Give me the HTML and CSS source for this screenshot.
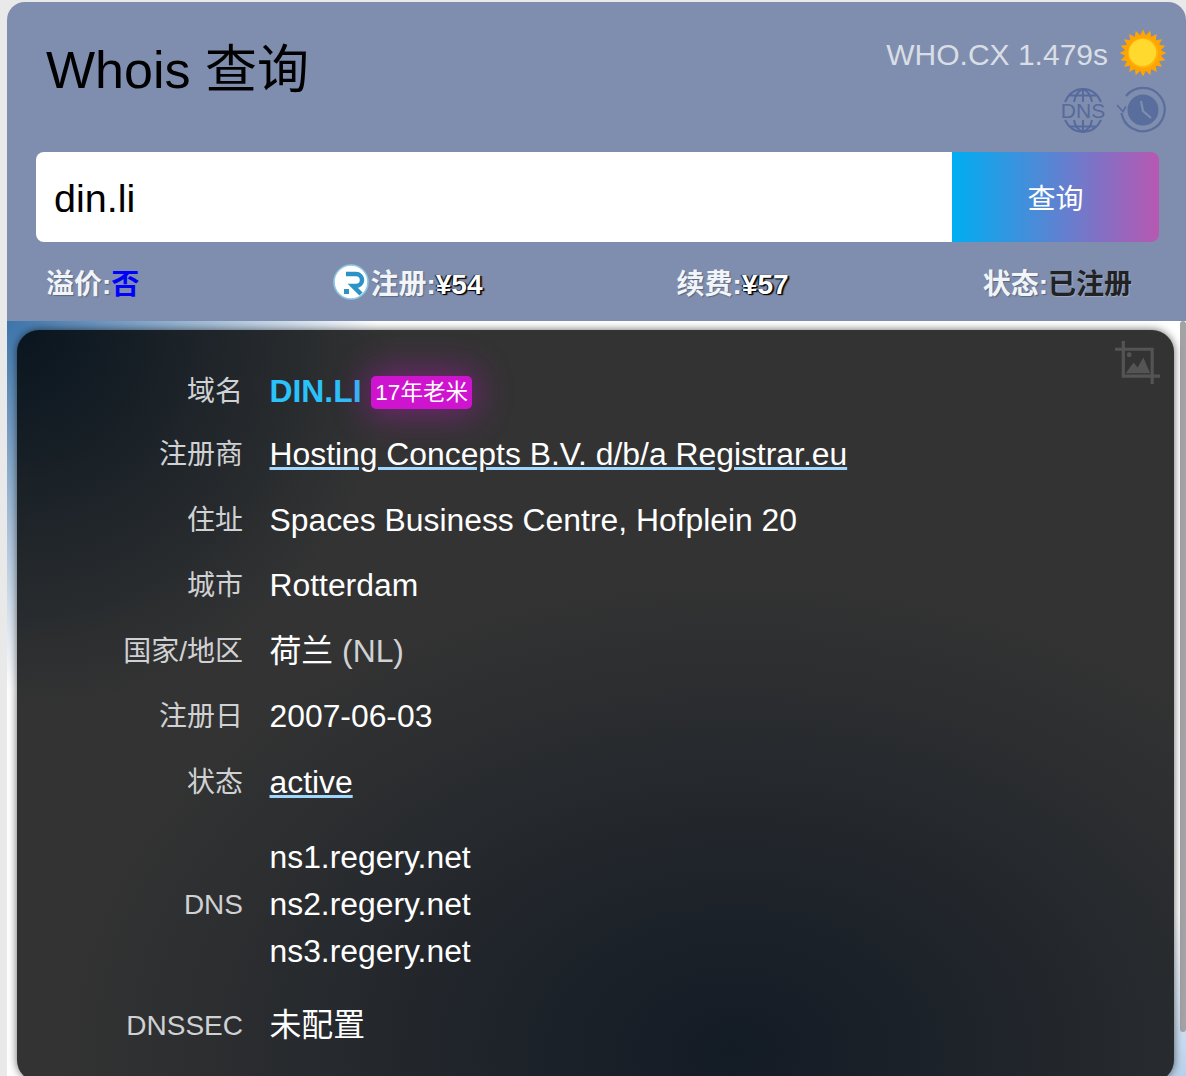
FILE: index.html
```html
<!DOCTYPE html>
<html lang="zh-CN">
<head>
    <meta charset="UTF-8">
    <meta name="viewport" content="width=device-width, initial-scale=1.0">
    <title>Whois 查询</title>
    <link rel="stylesheet" href="styles.css">
</head>
<body>
    <div class="page">
        <header class="top">
            <div class="top-head">
                <h1>Whois 查询</h1>
                <div class="top-tools">
                    <div class="speed">
                        <span>WHO.CX 1.479s</span>
                        <svg class="sun" viewBox="-24 -24 48 48" width="48" height="48">
                            <polygon fill="#ffa400" points="0,-23.5 2.82,-17.78 7.26,-22.35 8.17,-16.04 13.81,-19.01 12.73,-12.73 19.01,-13.81 16.04,-8.17 22.35,-7.26 17.78,-2.82 23.5,0 17.78,2.82 22.35,7.26 16.04,8.17 19.01,13.81 12.73,12.73 13.81,19.01 8.17,16.04 7.26,22.35 2.82,17.78 0,23.5 -2.82,17.78 -7.26,22.35 -8.17,16.04 -13.81,19.01 -12.73,12.73 -19.01,13.81 -16.04,8.17 -22.35,7.26 -17.78,2.82 -23.5,0 -17.78,-2.82 -22.35,-7.26 -16.04,-8.17 -19.01,-13.81 -12.73,-12.73 -13.81,-19.01 -8.17,-16.04 -7.26,-22.35 -2.82,-17.78"/>
                            <circle r="15" fill="#ffb70f"/>
                            <circle r="13.5" cx="-0.5" cy="-0.5" fill="#ffd92e"/>
                        </svg>
                    </div>
                    <div class="tool-icons">
                        <svg viewBox="0 0 46 46" width="46" height="46" fill="none" stroke="#566a9c" stroke-width="2">
                            <path d="M5 15C9 6 15 2 23 2s14 4 18 13"/>
                            <path d="M14 15c1-6 4-11 9-13 5 2 8 7 9 13"/>
                            <path d="M23 2v13M10 8.500h26"/>
                            <path d="M5 33c4 8 10 12 18 12s14-4 18-12"/>
                            <path d="M14 33c1 6 4 10 9 12 5-2 8-6 9-12"/>
                            <path d="M23 33v12M10 39.500h26"/>
                            <text class="dns-mark" x="23" y="30.500" text-anchor="middle">DNS</text>
                        </svg>
                        <svg viewBox="0 0 50 48" width="50" height="48" fill="none">
                            <path d="M10 10A21.700 21.700 0 1 1 5.500 27" stroke="#5a6e9e" stroke-width="2.200"/>
                            <path d="M1 19l6 6.500 3-5" stroke="#5a6e9e" stroke-width="1.800"/>
                            <circle cx="27" cy="24" r="15.500" fill="#5a6e9e"/>
                            <path d="M25 15l2 10 8 7" stroke="#7f8eae" stroke-width="2.200"/>
                        </svg>
                    </div>
                </div>
            </div>
            <form class="search">
                <input class="search-input" type="text" value="din.li">
                <button class="search-btn" type="button">查询</button>
            </form>
            <div class="facts">
                <div class="fact">溢价:<span class="no">否</span></div>
                <div class="fact fact-logo">
                    <svg viewBox="0 0 36 36" width="36" height="36">
                        <circle cx="18" cy="18" r="17" fill="#fff" stroke="#8cc6e2" stroke-width="1.600"/>
                        <path d="M13 10h10a6 6 0 0 1 0 12h-3l8 8" fill="none" stroke="#2b93c6" stroke-width="4.500"/>
                        <rect x="11" y="25" width="5" height="5" fill="#2b93c6"/>
                    </svg>
                    <span>注册:<span class="price">¥54</span></span>
                </div>
                <div class="fact">续费:<span class="price">¥57</span></div>
                <div class="fact">状态:<span class="state">已注册</span></div>
            </div>
        </header>

        <section class="result">
            <div class="side-bar"></div>
            <div class="card">
                <svg class="shot" viewBox="0 0 46 44" width="45" height="43" fill="none" stroke="#545454" stroke-width="3.200">
                    <path d="M0 8.500h38V44"/>
                    <path d="M8.500 0v36H46"/>
                    <circle cx="14.500" cy="14" r="2.500" fill="#545454" stroke="none"/>
                    <path d="M11 33l8-11 4 5 6-10 7 16z" fill="#545454" stroke="none"/>
                </svg>
                <table class="info">
                    <tr class="row-first">
                        <th>域名</th>
                        <td><span class="domain">DIN.LI</span> <span class="age">17年老米</span></td>
                    </tr>
                    <tr>
                        <th>注册商</th>
                        <td><a href="#">Hosting Concepts B.V. d/b/a Registrar.eu</a></td>
                    </tr>
                    <tr>
                        <th>住址</th>
                        <td>Spaces Business Centre, Hofplein 20</td>
                    </tr>
                    <tr>
                        <th>城市</th>
                        <td>Rotterdam</td>
                    </tr>
                    <tr>
                        <th>国家/地区</th>
                        <td>荷兰 <span class="code">(NL)</span></td>
                    </tr>
                    <tr>
                        <th>注册日</th>
                        <td>2007-06-03</td>
                    </tr>
                    <tr>
                        <th>状态</th>
                        <td><a href="#">active</a></td>
                    </tr>
                    <tr>
                        <th>DNS</th>
                        <td class="ns">ns1.regery.net<br>ns2.regery.net<br>ns3.regery.net</td>
                    </tr>
                    <tr class="row-last">
                        <th>DNSSEC</th>
                        <td>未配置</td>
                    </tr>
                </table>
            </div>
        </section>
    </div>
</body>
</html>
```

FILE: styles.css
```css
html {
    overflow: hidden;
}
body {
    margin: 0;
    padding: 2px 0 0 7px;
    background: #e9e9e9;
    font-family: "Liberation Sans", "Noto Sans CJK SC", sans-serif;
}
.page {
    border-radius: 18px 18px 0 0;
    overflow: hidden;
}
.top {
    background: #7f8eae;
    height: 319px;
    padding: 0 27px 0 29px;
    box-sizing: border-box;
}
.top-head {
    display: flex;
    justify-content: space-between;
    height: 150px;
}
h1 {
    margin: 36px 0 0 10px;
    font-size: 52px;
    font-weight: normal;
    line-height: 64px;
    color: #000;
}
.top-tools {
    margin: 27px -7px 0 0;
    width: 290px;
}
.speed {
    display: flex;
    justify-content: flex-end;
    align-items: center;
    gap: 11px;
    font-size: 30px;
    color: #d9dee6;
    height: 48px;
}
.speed span {
    margin-top: 4px;
}
.sun {
    margin-right: -1px;
}
.tool-icons {
    display: flex;
    justify-content: flex-end;
    align-items: center;
    gap: 10px;
    margin-top: 9px;
}
.dns-mark {
    font-family: "Liberation Sans", sans-serif;
    font-size: 21px;
    fill: #566a9c;
    stroke: none;
}
.search {
    display: flex;
    height: 90px;
}
.search-input {
    flex: 1;
    min-width: 0;
    border: none;
    border-radius: 8px 0 0 8px;
    background: #fff;
    padding: 3px 18px 0;
    font-family: inherit;
    font-size: 39.500px;
    color: #000;
    outline: none;
}
.search-btn {
    width: 207px;
    border: none;
    border-radius: 0 8px 8px 0;
    background: linear-gradient(90deg, #00aef2, #b758b2);
    color: #fff;
    font-family: inherit;
    font-size: 28px;
}
.facts {
    display: flex;
    justify-content: space-between;
    align-items: center;
    height: 79px;
    padding: 0 27px 0 10px;
    font-size: 28px;
    font-weight: bold;
    color: #f1f4f8;
}
.fact {
    text-shadow: 1px 1px 1px rgba(60, 70, 90, .55);
    white-space: nowrap;
}
.fact-logo {
    display: flex;
    align-items: center;
    gap: 1px;
}
.no {
    color: #0000ff;
    text-shadow: none;
}
.price {
    color: #fff;
    text-shadow: 1px 1px 1px #000, -1px 0 1px #000, 2px 1px 1px #222;
}
.state {
    color: #222;
    text-shadow: 1px 1px 1px rgba(255, 255, 255, .25);
}
.result {
    position: relative;
    padding: 9px 12px 30px 10px;
    background:
        radial-gradient(circle at 0 0, #3c74ab 0, rgba(60, 116, 171, 0) 370px),
        radial-gradient(circle at 100% 100%, #a9c6e6 0, rgba(169, 198, 230, 0) 200px),
        #fff;
}
.side-bar {
    position: absolute;
    top: 0;
    right: 0;
    width: 6px;
    height: 711px;
    background: #a4a2a4;
    border-radius: 3px;
}
.card {
    position: relative;
    height: 752px;
    box-sizing: border-box;
    padding-top: 31px;
    border-radius: 22px;
    box-shadow: 0 0 9px rgba(0, 0, 0, .6);
    background:
        radial-gradient(circle at 0 0, #09151f 0, rgba(9, 21, 31, 0) 380px),
        radial-gradient(680px 480px at 62% 96%, #131b25 0, rgba(19, 27, 37, 0) 100%),
        #333;
}
.shot {
    position: absolute;
    top: 11px;
    right: 14px;
}
.info {
    border-collapse: collapse;
}
.info th {
    width: 226px;
    padding: 0;
    text-align: right;
    font-size: 28px;
    line-height: 37px;
    font-weight: normal;
    color: #cfd1d3;
}
.info td {
    height: 65.500px;
    padding: 0 0 0 26.500px;
    font-size: 31.850px;
    line-height: 37px;
    color: #fff;
}
.info a {
    color: #fff;
    text-decoration-color: #9fd6ff;
}
.info .row-first td {
    height: 61px;
}
.info .ns {
    height: 179px;
    line-height: 47px;
}
.info .row-last td {
    height: 63px;
}
.domain {
    font-weight: bold;
    color: #2bc1fa;
}
.age {
    display: inline-block;
    margin-left: 1px;
    padding: 0 4px;
    line-height: 33px;
    font-size: 22.500px;
    color: #fff;
    background: #cf14d0;
    border-radius: 5px;
    box-shadow: 0 0 35px 5px rgba(207, 20, 208, .42);
    vertical-align: 2px;
}
.code {
    color: #cfd1d3;
}
```
